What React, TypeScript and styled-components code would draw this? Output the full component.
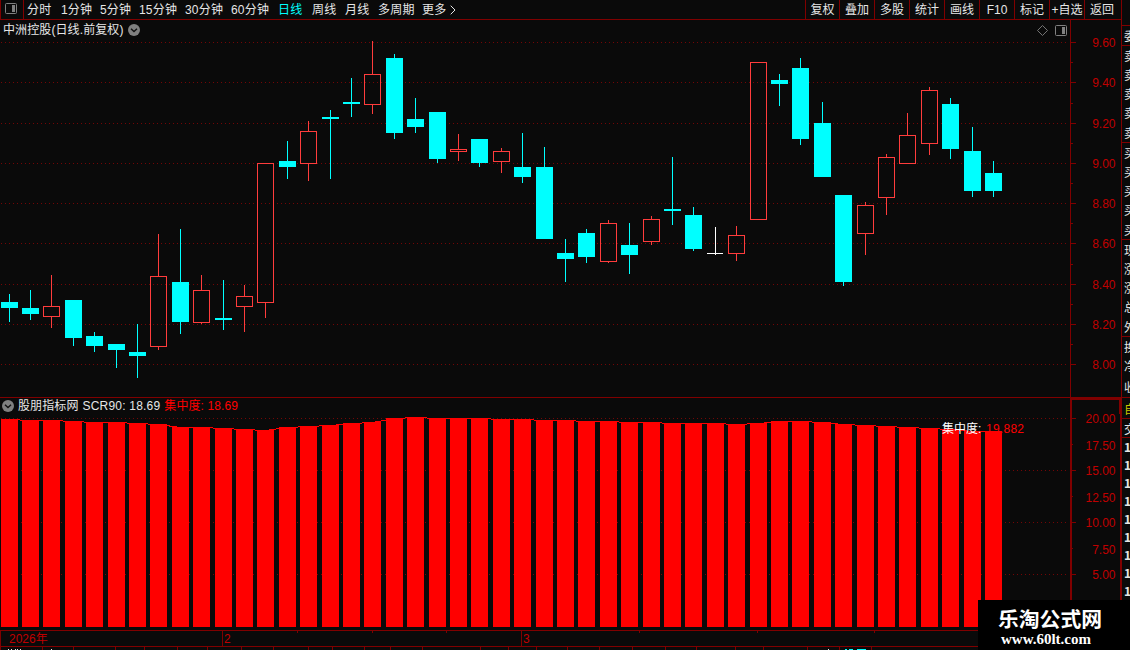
import React from 'react';
import styled, { createGlobalStyle, css } from 'styled-components';

const palette = {
  background: '#0a0a0a',
  line: '#800000',
  grid: '#740606',
  axisText: '#c00000',
  up: '#ff3c3c',
  down: '#00ffff',
  bar: '#ff0000',
  text: '#e6e6e6',
  grey: '#808080',
};

const sans = "'Liberation Sans', 'Noto Sans CJK SC', sans-serif";
const cjk = "'Noto Sans CJK SC', sans-serif";

const GlobalStyle = createGlobalStyle`
  * {
    box-sizing: border-box;
  }

  body {
    margin: 0;
    overflow: hidden;
    background-color: ${palette.background};
  }

  svg {
    display: block;
  }
`;

const Screen = styled.div`
  position: relative;
  width: 1130px;
  height: 650px;
  overflow: hidden;
  display: flex;
  background-color: ${palette.background};
  color: ${palette.text};
  font-family: ${sans};
  font-size: 12px;
  white-space: nowrap;
`;

const Main = styled.main`
  width: 1121px;
  flex: none;
  display: flex;
  flex-direction: column;
`;

const NavBar = styled.nav`
  height: 20px;
  display: flex;
  border-bottom: 1px solid ${palette.line};
  border-left: 1px solid ${palette.line};
`;

const NavIcon = styled.div`
  width: 23px;
  padding: 3px 0 0 4px;
  border-right: 1px solid ${palette.line};
`;

const Periods = styled.div`
  display: flex;
  flex: 1;
  padding-left: 3px;
`;

const Period = styled.span<{ $width: number; $active?: boolean }>`
  width: ${(p) => p.$width}px;
  display: inline-flex;
  align-items: center;
  gap: 4px;
  line-height: 18px;
  letter-spacing: 0.2px;
  ${(p) =>
    p.$active &&
    css`
      color: ${palette.down};
    `}
`;

const Tool = styled.span`
  width: 35px;
  line-height: 20px;
  text-align: center;
  border-left: 1px solid ${palette.line};

  &:first-child {
    width: 34px;
  }
`;

const Tools = styled.div`
  display: flex;
  width: 316px;
  height: 19px;
`;

const PaneHead = styled.div<{ $height: number }>`
  height: ${(p) => p.$height}px;
  display: flex;
`;

const PaneTitle = styled.div<{ $gap: number; $left: number }>`
  width: 1070px;
  display: flex;
  align-items: center;
  gap: ${(p) => p.$gap}px;
  padding: 0 3px 0 ${(p) => p.$left}px;
`;

const AxisHead = styled.div<{ $framed?: boolean }>`
  width: 51px;
  border-left: 1px solid ${palette.line};
  ${(p) =>
    p.$framed &&
    css`
      border: 2px solid ${palette.line};
      border-bottom: none;
    `}
`;

const Label = styled.span<{ $color?: string; $spacing?: number }>`
  color: ${(p) => p.$color || palette.text};
  letter-spacing: ${(p) => p.$spacing || 0}px;
  line-height: 16px;
`;

const HeadIcons = styled.div`
  display: flex;
  align-items: center;
  gap: 7px;
  margin-left: auto;
`;

const Chart = styled.svg`
  flex: none;
  overflow: visible;
  shape-rendering: crispEdges;

  text {
    font-family: ${sans};
    font-size: 12px;
  }
`;

const Divider = styled.div`
  height: 1px;
  background-color: ${palette.line};
`;

const DateAxis = styled.div`
  height: 17px;
  display: flex;
  border-top: 1px solid ${palette.line};
  border-bottom: 1px solid ${palette.line};
  border-left: 1px solid ${palette.line};
`;

const DateCell = styled.div<{ $width: number; $indent?: number }>`
  width: ${(p) => p.$width}px;
  display: flex;
  color: ${palette.axisText};
  line-height: 16px;
  padding-left: ${(p) => p.$indent || 0}px;

  & + & {
    border-left: 1px solid ${palette.line};
  }
`;

const DateTick = styled.i<{ $gap: number }>`
  width: 1px;
  height: 2px;
  margin-left: ${(p) => p.$gap}px;
  background-color: ${palette.line};
`;

const Side = styled.aside`
  width: 9px;
  overflow: hidden;
  border-left: 1px solid ${palette.line};
  font-family: ${cjk};
`;

const SideRow = styled.div<{ $height: number; $ruled?: boolean; $color?: string; $bold?: boolean }>`
  height: ${(p) => p.$height}px;
  line-height: ${(p) => p.$height}px;
  padding-left: 2px;
  color: ${(p) => p.$color || palette.text};
  font-weight: ${(p) => (p.$bold ? 'bold' : 'normal')};
  ${(p) =>
    p.$ruled &&
    css`
      border-bottom: 1px solid ${palette.line};
    `}
`;

const Stamp = styled.div`
  position: absolute;
  right: 0;
  bottom: 0;
  width: 152px;
  height: 50px;
  padding: 7px 0 0 20px;
  background-color: #000;
  color: #fff;
  font-weight: bold;
`;

const StampName = styled.div`
  font-family: ${cjk};
  font-size: 20.8px;
  line-height: 22px;
`;

const StampUrl = styled.div`
  padding: 1px 0 0 3px;
  font-family: 'Liberation Serif', serif;
  font-size: 15px;
  line-height: 18px;
`;

const PanelIcon = () => (
  <svg width="12" height="11" viewBox="0 0 12 11">
    <rect x="0.5" y="0.5" width="11" height="10" rx="1" fill="none" stroke={palette.grey} />
    <rect x="7" y="2" width="3" height="7" fill={palette.grey} />
  </svg>
);

const DiamondIcon = () => (
  <svg width="11" height="11" viewBox="0 0 11 11">
    <path d="M5.5 0.5 10.5 5.5 5.5 10.5 0.5 5.5Z" fill="none" stroke={palette.grey} strokeWidth="0.9" />
  </svg>
);

const CollapseIcon = () => (
  <svg width="12" height="12" viewBox="0 0 12 12">
    <circle cx="6" cy="6" r="6" fill={palette.grey} />
    <path d="M3 4.8 6 7.6 9 4.8" fill="none" stroke="#111" strokeWidth="1.4" />
  </svg>
);

const MoreIcon = () => (
  <svg width="6" height="10" viewBox="0 0 6 10">
    <path d="M0.7 0.7 5 5 0.7 9.3" fill="none" stroke={palette.text} />
  </svg>
);

const periods: [string, number][] = [
  ['分时', 34],
  ['1分钟', 39],
  ['5分钟', 39],
  ['15分钟', 46],
  ['30分钟', 46],
  ['60分钟', 47],
  ['日线', 34],
  ['周线', 33],
  ['月线', 33],
  ['多周期', 44],
  ['更多', 40],
];

const tools = ['复权', '叠加', '多股', '统计', '画线', 'F10', '标记', '+自选', '返回'];

// direction, wick top, body top, body bottom, wick bottom
type Candle = ['u' | 'd' | 'f', number, number, number, number];

const candles: Candle[] = [
  ['d', 294, 302, 308, 322],
  ['d', 290, 308, 314, 320],
  ['u', 275, 306, 317, 328],
  ['d', 300, 300, 338, 346],
  ['d', 332, 336, 346, 352],
  ['d', 344, 344, 350, 368],
  ['d', 324, 352, 356, 378],
  ['u', 234, 276, 347, 350],
  ['d', 229, 282, 322, 334],
  ['u', 275, 290, 323, 324],
  ['d', 280, 318, 320, 330],
  ['u', 285, 296, 307, 332],
  ['u', 163, 163, 303, 318],
  ['d', 141, 161, 167, 179],
  ['u', 121, 131, 164, 181],
  ['d', 110, 117, 119, 179],
  ['d', 78, 102, 104, 117],
  ['u', 41, 74, 105, 114],
  ['d', 54, 58, 133, 139],
  ['d', 98, 119, 127, 133],
  ['d', 112, 112, 159, 163],
  ['u', 134, 149, 152, 161],
  ['d', 139, 139, 163, 167],
  ['u', 148, 151, 162, 173],
  ['d', 133, 167, 177, 183],
  ['d', 147, 167, 239, 239],
  ['d', 239, 253, 259, 282],
  ['d', 229, 233, 257, 263],
  ['u', 220, 223, 262, 263],
  ['d', 223, 245, 255, 274],
  ['u', 216, 219, 242, 245],
  ['d', 157, 209, 211, 225],
  ['d', 207, 215, 249, 251],
  ['f', 227, 253, 254, 255],
  ['u', 226, 235, 254, 261],
  ['u', 62, 62, 220, 220],
  ['d', 74, 80, 84, 106],
  ['d', 58, 68, 139, 145],
  ['d', 102, 123, 177, 177],
  ['d', 195, 195, 282, 286],
  ['u', 202, 205, 234, 255],
  ['u', 154, 157, 198, 215],
  ['u', 113, 135, 164, 164],
  ['u', 87, 90, 144, 155],
  ['d', 98, 104, 149, 159],
  ['d', 127, 151, 191, 197],
  ['d', 161, 173, 191, 197],
];

const barTops = [
  419, 420, 420, 421, 422, 422, 423, 424, 427, 427, 428, 429, 430, 427, 426, 425, 423, 422, 418, 417, 418, 418, 418,
  419, 419, 420, 420, 421, 421, 422, 422, 423, 423, 423, 424, 423, 421, 421, 422, 424, 425, 426, 427, 428, 429, 431, 431,
];

const priceTicks: [number, string][] = [
  [42, '9.60'],
  [82, '9.40'],
  [123, '9.20'],
  [163, '9.00'],
  [203, '8.80'],
  [243, '8.60'],
  [284, '8.40'],
  [324, '8.20'],
  [364, '8.00'],
];
const priceMinor = [62, 103, 143, 183, 223, 264, 304, 344];

const scrTicks: [number, string][] = [
  [418, '20.00'],
  [470, '15.00'],
  [522, '10.00'],
  [574, '5.00'],
];
const scrMinor: [number, string][] = [
  [444, '17.50'],
  [496, '12.50'],
  [548, '7.50'],
];

const tabEdges = [
  0, 42, 73, 115, 144, 177, 207, 241, 273, 308, 332, 364, 390, 422, 480, 508, 536, 567, 599, 632, 665, 696, 735, 763,
  807, 839, 871,
];

const sideRows: { text: string; height: number; ruled?: boolean; color?: string; bold?: boolean }[] = [
  { text: '', height: 26, ruled: true },
  { text: '委', height: 20, ruled: true },
  ...['卖', '卖', '卖', '卖'].map((text) => ({ text, height: 19 })),
  { text: '卖', height: 21, ruled: true },
  ...['买', '买', '买', '买'].map((text) => ({ text, height: 19 })),
  { text: '买', height: 21, ruled: true },
  ...['现', '涨', '涨', '总'].map((text) => ({ text, height: 19 })),
  { text: '外', height: 21, ruled: true },
  { text: '换', height: 19 },
  { text: '净', height: 19 },
  { text: '收', height: 23, ruled: true },
  { text: '自', height: 21, ruled: true, color: '#c8c800' },
  { text: '交', height: 19, ruled: true },
  ...Array.from({ length: 9 }, () => ({ text: '1', height: 18, bold: true })),
];

const candleX = (i: number) => Math.floor(1 + i * 21.4 + 0.001);

const GridLine = ({ y }: { y: number }) => (
  <line x1="1" x2="1069" y1={y + 0.5} y2={y + 0.5} stroke={palette.grid} strokeDasharray="1 3" />
);

const Tick = ({ y, width }: { y: number; width: number }) => (
  <rect x="1071" y={y} width={width} height="1" fill={palette.line} />
);

const AxisLabel = ({ y, children }: { y: number; children: string }) => (
  <text x="1115.5" y={y + 5} textAnchor="end" fill={palette.axisText}>
    {children}
  </text>
);

const CandleMark = ({ index, candle }: { index: number; candle: Candle }) => {
  const [kind, high, top, bottom, low] = candle;
  const x = candleX(index);

  if (kind === 'u') {
    return (
      <g fill={palette.up}>
        <rect x={x + 8} y={high} width="1" height={top - high} />
        <rect x={x + 8} y={bottom} width="1" height={low - bottom} />
        <rect x={x + 0.5} y={top + 0.5} width="16" height={bottom - top - 1} fill="none" stroke={palette.up} />
      </g>
    );
  }

  return (
    <g fill={kind === 'f' ? '#ffffff' : palette.down}>
      <rect x={x + 8} y={high} width="1" height={low - high} />
      <rect x={x} y={top} width={kind === 'f' ? 16 : 17} height={bottom - top} />
    </g>
  );
};

const PriceChart = () => (
  <Chart width="1121" height="357" viewBox="0 40 1121 357">
    {priceTicks.map(([y, label]) => (
      <g key={y}>
        <GridLine y={y} />
        <Tick y={y} width={5} />
        <AxisLabel y={y}>{label}</AxisLabel>
      </g>
    ))}
    {priceMinor.map((y) => (
      <Tick key={y} y={y} width={2} />
    ))}
    <rect x="1070" y="40" width="1" height="357" fill={palette.line} />
    {candles.map((candle, i) => (
      <CandleMark key={i} index={i} candle={candle} />
    ))}
  </Chart>
);

const ScrChart = () => (
  <Chart width="1121" height="216" viewBox="0 414 1121 216">
    {scrTicks.map(([y, label]) => (
      <g key={y}>
        <GridLine y={y} />
        <Tick y={y} width={5} />
        <AxisLabel y={y}>{label}</AxisLabel>
      </g>
    ))}
    {scrMinor.map(([y, label]) => (
      <g key={y}>
        <Tick y={y} width={2} />
        <AxisLabel y={y + 1}>{label}</AxisLabel>
      </g>
    ))}
    <rect x="1070" y="414" width="2" height="216" fill={palette.line} />
    <rect x="1120" y="414" width="1" height="216" fill={palette.line} />
    {barTops.map((top, i) => (
      <rect key={i} x={candleX(i)} y={top} width="17" height={627 - top} fill={palette.bar} />
    ))}
    <polyline
      points={barTops.map((top, i) => `${candleX(i) + 8.5},${top + 0.5}`).join(' ')}
      fill="none"
      stroke={palette.bar}
    />
    <text x="942" y="433" fill="#ffffff">
      集中度:
    </text>
    <text x="986" y="433" fill={palette.bar} textLength="38">
      19.882
    </text>
  </Chart>
);

const BottomTabs = () => (
  <Chart width="1121" height="3" viewBox="0 647 1121 3">
    {tabEdges.map((x) => (
      <rect key={x} x={x} y="647" width="1" height="3" fill={palette.line} />
    ))}
    {[8, 11, 15, 17, 20, 51, 828].map((x) => (
      <rect key={x} x={x} y="649" width="1" height="1" fill={palette.text} />
    ))}
    <rect x="845" y="649" width="2" height="1" fill={palette.down} />
    <rect x="849" y="649" width="4" height="1" fill={palette.down} />
    <rect x="857" y="649" width="9" height="1" fill={palette.down} />
  </Chart>
);

const App = () => (
  <>
    <GlobalStyle />
    <Screen>
      <Main>
        <NavBar>
          <NavIcon>
            <PanelIcon />
          </NavIcon>
          <Periods>
            {periods.map(([label, width]) => (
              <Period key={label} $width={width} $active={label === '日线'}>
                {label}
                {label === '更多' && <MoreIcon />}
              </Period>
            ))}
          </Periods>
          <Tools>
            {tools.map((label) => (
              <Tool key={label}>{label}</Tool>
            ))}
          </Tools>
        </NavBar>
        <PaneHead $height={20}>
          <PaneTitle $left={3} $gap={4}>
            <Label $spacing={0.1}>中洲控股(日线.前复权)</Label>
            <CollapseIcon />
            <HeadIcons>
              <DiamondIcon />
              <PanelIcon />
            </HeadIcons>
          </PaneTitle>
          <AxisHead />
        </PaneHead>
        <PriceChart />
        <Divider />
        <PaneHead $height={16}>
          <PaneTitle $left={2} $gap={4}>
            <CollapseIcon />
            <Label $spacing={0.1}>股朋指标网</Label>
            <Label $spacing={0.2}>SCR90: 18.69</Label>
            <Label $color={palette.bar} $spacing={0.1}>
              集中度: 18.69
            </Label>
          </PaneTitle>
          <AxisHead $framed />
        </PaneHead>
        <ScrChart />
        <DateAxis>
          <DateCell $width={221} $indent={8}>
            2026年
          </DateCell>
          <DateCell $width={299} $indent={1}>
            2
            <DateTick $gap={66} />
            <DateTick $gap={74} />
            <DateTick $gap={73} />
          </DateCell>
          <DateCell $width={457} $indent={1}>
            3
            <DateTick $gap={109} />
            <DateTick $gap={117} />
            <DateTick $gap={116} />
          </DateCell>
        </DateAxis>
        <BottomTabs />
      </Main>
      <Side>
        {sideRows.map((row, i) => (
          <SideRow key={i} $height={row.height} $ruled={row.ruled} $color={row.color} $bold={row.bold}>
            {row.text}
          </SideRow>
        ))}
      </Side>
      <Stamp>
        <StampName>乐淘公式网</StampName>
        <StampUrl>www.60lt.com</StampUrl>
      </Stamp>
    </Screen>
  </>
);

export default App;
